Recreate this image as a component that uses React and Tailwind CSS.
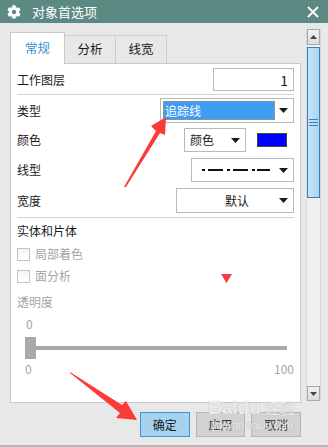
import React from 'react';
import { FaCog } from 'react-icons/fa';

// ── small pieces ─────────────────────────────────────────────────────────────
const Caret = () => (
  <svg width="9" height="5" viewBox="0 0 9 5" className="shrink-0">
    <path d="M0 0h9L4.5 5z" fill="#1a1a1a" />
  </svg>
);

const Select = ({ className = '', children }) => (
  <div className={`flex items-center border border-[#b9b9b9] bg-white pr-[5px] ${className}`}>
    <div className="flex-1 flex items-center min-w-0 h-full">{children}</div>
    <Caret />
  </div>
);

const Check = ({ label }) => (
  <div className="flex items-center h-[20px] gap-[5px]">
    <div className="w-[13px] h-[13px] border border-[#c3c3c3] bg-gradient-to-b from-[#f4f4f4] to-white" />
    <span className="text-[#a5a5a5]">{label}</span>
  </div>
);

const Btn = ({ primary, children }) => (
  <div
    className={`w-[53px] h-[25px] flex items-center justify-center border text-[12px] ${
      primary ? 'bg-[#a5d3ef] border-[#3b97d8] text-[#1a1a1a]' : 'bg-[#d2d2d2] border-[#b5b5b5] text-[#333]'
    }`}
  >
    {children}
  </div>
);

export default function App() {
  return (
    <div
      className="relative w-[328px] h-[447px] overflow-hidden bg-[#e8e8e8] border-b-2 border-[#b8b8b8] text-[12px] text-[#1a1a1a] leading-none"
      style={{ fontFamily: '"Noto Sans CJK SC", "Noto Sans", sans-serif' }}
    >
      {/* Title bar */}
      <div className="h-[23px] bg-[#5c8a82] flex items-center pl-[7px] pr-[9px] text-white">
        <FaCog size={14} />
        <span className="ml-[11px] text-[13px]">对象首选项</span>
        <svg width="12" height="12" viewBox="0 0 12 12" className="ml-auto">
          <path d="M1 1l10 10M11 1L1 11" stroke="white" strokeWidth="1.8" />
        </svg>
      </div>

      <div className="flex">
        {/* Left column: tabs + panel */}
        <div className="ml-[10px] mt-[9px] w-[291px]">
          <div className="flex items-end h-[31px]">
            <div className="w-[55px] h-[32px] -mb-px relative z-10 bg-white border border-b-0 border-[#c9c9c9] flex items-center justify-center text-[#3a8fd0] text-[12.5px]">
              常规
            </div>
            <div className="w-[51px] h-[28px] border border-l-0 border-b-0 border-[#cdcdcd] flex items-center justify-center text-[12.5px]">
              分析
            </div>
            <div className="w-[51px] h-[28px] border border-l-0 border-b-0 border-[#cdcdcd] flex items-center justify-center text-[12.5px]">
              线宽
            </div>
          </div>

          <div className="h-[340px] bg-white border border-[#c9c9c9] px-[6px]">
            <div className="mt-[4px] h-[23px] flex items-center justify-between">
              <span>工作图层</span>
              <div className="w-[81px] h-[23px] border border-[#b9b9b9] flex items-center justify-end pr-[5px] text-[14px]">1</div>
            </div>
            <div className="mt-[3px] h-px bg-[#d4d4d4]" />

            <div className="mt-[3px] h-[25px] flex items-center justify-between">
              <span>类型</span>
              <Select className="w-[134px] h-[25px] pl-[2px]">
                <div className="h-[19px] w-[112px] bg-[#3d9df2] border border-dotted border-[#d98b3a] flex items-center text-white pl-px">
                  追踪线
                </div>
              </Select>
            </div>

            <div className="mt-[5px] h-[24px] flex items-center">
              <span>颜色</span>
              <Select className="ml-auto w-[62px] h-[24px] pl-[5px]">颜色</Select>
              <div className="ml-[11px] mr-[7px] w-[30px] h-[14px] bg-[#0000ff] border border-[#444]" />
            </div>

            <div className="mt-[6px] h-[24px] flex items-center justify-between">
              <span>线型</span>
              <Select className="w-[103px] h-[24px] pl-[10px]">
                <svg width="68" height="4" viewBox="0 0 68 4">
                  <g fill="#111">
                    <rect x="0" y="1" width="3" height="2" />
                    <rect x="6" y="1" width="15" height="2" />
                    <rect x="25" y="1" width="3" height="2" />
                    <rect x="31" y="1" width="15" height="2" />
                    <rect x="50" y="1" width="3" height="2" />
                    <rect x="55" y="1" width="13" height="2" />
                  </g>
                </svg>
              </Select>
            </div>

            <div className="mt-[6px] h-[25px] flex items-center justify-between">
              <span>宽度</span>
              <Select className="w-[118px] h-[25px]">
                <span className="ml-[48px]">默认</span>
              </Select>
            </div>
            <div className="mt-[4px] h-px bg-[#d4d4d4]" />

            <div className="mt-[3px] h-[20px] flex items-center">实体和片体</div>
            <div className="mt-[3px]">
              <Check label="局部着色" />
            </div>
            <div className="mt-[2px]">
              <Check label="面分析" />
            </div>
            <div className="mt-[6px] h-[20px] flex items-center text-[#a5a5a5]">透明度</div>

            <div className="mt-[2px] h-[20px] flex items-center pl-[9px] text-[#a5a5a5]">0</div>
            <div className="mt-[3px] h-[22px] flex items-center pl-[8px] pr-[7px]">
              <div className="w-[11px] h-[22px] bg-[#a9a9a9]" />
              <div className="flex-1 h-[4px] bg-[#a9a9a9]" />
            </div>
            <div className="mt-[2px] h-[16px] flex items-center justify-between pl-[8px] text-[#a5a5a5]">
              <span>0</span>
              <span>100</span>
            </div>
          </div>

          {/* Buttons */}
          <div className="mt-[9px] flex gap-[6px] pl-[130px]">
            <Btn primary>确定</Btn>
            <Btn>应用</Btn>
            <Btn>取消</Btn>
          </div>
        </div>

        {/* Scrollbar */}
        <div className="ml-[5px] mt-[6px] w-[15px] h-[372px] bg-[#efefef] border-x border-[#d8d8d8] flex flex-col">
          <div className="h-[16px] border border-[#a8a8a8] bg-gradient-to-b from-[#f2f2f2] to-[#dcdcdc] flex items-center justify-center">
            <svg width="7" height="4" viewBox="0 0 7 4">
              <path d="M0 4h7L3.5 0z" fill="#444" />
            </svg>
          </div>
          <div className="mt-[2px] h-[151px] border border-[#3c7fb8] bg-gradient-to-r from-[#c4e3f8] to-[#aad6f3] flex items-center justify-center">
            <svg width="9" height="7" viewBox="0 0 9 7">
              <path d="M0 0.5h9M0 3.5h9M0 6.5h9" stroke="#3c7fb8" strokeWidth="1" />
            </svg>
          </div>
          <div className="mt-auto h-[15px] border border-[#a8a8a8] bg-gradient-to-b from-[#f2f2f2] to-[#dcdcdc] flex items-center justify-center">
            <svg width="7" height="4" viewBox="0 0 7 4">
              <path d="M0 0h7L3.5 4z" fill="#444" />
            </svg>
          </div>
        </div>
      </div>

      {/* Annotations drawn over the screenshot */}
      <svg className="absolute inset-0 pointer-events-none" width="328" height="447" viewBox="0 0 328 447">
        <g fill="#fb3a3a">
          <path d="M124 187 L156 131 L151 126 L166 117 L165 135 L160 133 L126 187 Z" />
          <path d="M70 372 L122 405 L126 401 L137 420 L116 418 L120 413 L70 373 Z" />
          <path d="M221 274 h11 l-5.5 9 z" />
        </g>
      </svg>

      {/* Watermark */}
      <div className="absolute left-[208px] top-[398px] text-white/80 pointer-events-none" style={{ fontFamily: '"Liberation Sans", sans-serif', textShadow: '0 0 1px #9a9a9a' }}>
        <div className="text-[19px] font-bold leading-none">Baidu<span className="text-[15px] font-normal ml-[4px]" style={{ fontFamily: '"Noto Sans CJK SC", sans-serif' }}>经验</span></div>
        <div className="text-[10px] mt-[4px] ml-[4px]">jingyan.baidu.com</div>
      </div>
    </div>
  );
}
